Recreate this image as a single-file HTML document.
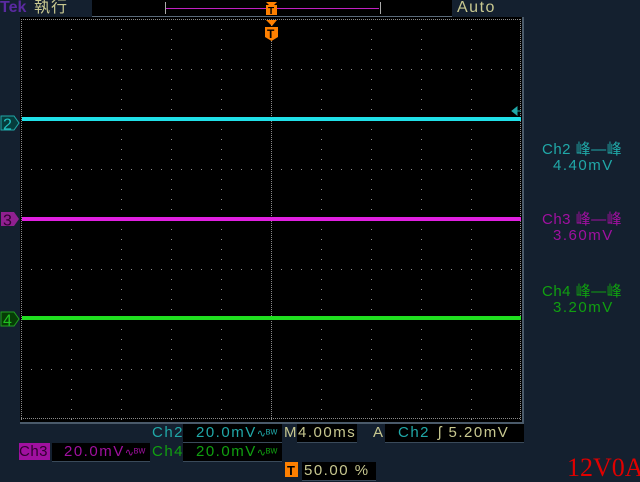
<!DOCTYPE html>
<html><head><meta charset="utf-8"><style>
*{margin:0;padding:0}
body{width:640px;height:480px;background:#14202f;position:relative;overflow:hidden;font-family:"Liberation Sans","Noto Sans CJK TC",sans-serif}
.t{position:absolute;font-size:15px;line-height:16px;white-space:nowrap;letter-spacing:1.5px}
.box{position:absolute;background:#000;height:18px;border-bottom:1px solid #3a4a5a}
.r{font-size:15px;letter-spacing:1.5px}
</style></head><body>
<div class="t" style="left:0;top:0;color:#5a2aa0;font-weight:bold;font-size:16px;letter-spacing:0">Tek</div>
<div class="t" style="left:34px;top:0;color:#c8c890;font-size:16px;letter-spacing:1px">執行</div>
<div style="position:absolute;left:92px;top:0;width:360px;height:16px;background:#000;border-bottom:1px solid #5a6a7a"></div>
<div style="position:absolute;left:165px;top:2px;width:214px;height:12px;border-left:1px solid #aaa;border-right:1px solid #aaa"></div>
<div style="position:absolute;left:166px;top:8px;width:213px;height:1px;background:#c020c0"></div>
<div class="t" style="left:457px;top:0;color:#c8c890;font-size:16px">Auto</div>
<div style="position:absolute;left:20px;top:17px;width:502px;height:405px;background:#000;border-right:2px solid #4a5a6a;border-bottom:2px solid #4a5a6a"></div>
<svg style="position:absolute;left:0;top:0" width="640" height="480">
<g stroke="#8a8a8a" stroke-width="1" stroke-dasharray="1,9">
<line x1="21.5" y1="19" x2="21.5" y2="420" stroke-dasharray="1,1"/>
<line x1="71.5" y1="19" x2="71.5" y2="420"/><line x1="121.5" y1="19" x2="121.5" y2="420"/><line x1="171.5" y1="19" x2="171.5" y2="420"/><line x1="221.5" y1="19" x2="221.5" y2="420"/><line x1="271.5" y1="19" x2="271.5" y2="420" stroke-dasharray="1,1"/><line x1="321.5" y1="19" x2="321.5" y2="420"/><line x1="371.5" y1="19" x2="371.5" y2="420"/><line x1="421.5" y1="19" x2="421.5" y2="420"/><line x1="471.5" y1="19" x2="471.5" y2="420"/><line x1="520.5" y1="19" x2="520.5" y2="420" stroke-dasharray="1,1"/>
<line x1="21" y1="19.5" x2="521" y2="19.5" stroke-dasharray="1,1"/><line x1="21" y1="69.5" x2="521" y2="69.5"/><line x1="21" y1="119.5" x2="521" y2="119.5"/><line x1="21" y1="169.5" x2="521" y2="169.5"/><line x1="21" y1="219.5" x2="521" y2="219.5" stroke-dasharray="1,1"/><line x1="21" y1="269.5" x2="521" y2="269.5"/><line x1="21" y1="319.5" x2="521" y2="319.5"/><line x1="21" y1="369.5" x2="521" y2="369.5"/><line x1="21" y1="418.5" x2="521" y2="418.5" stroke-dasharray="1,1"/>
</g>
<line x1="22" y1="119" x2="521" y2="119" stroke="#20e0e8" stroke-width="4"/>
<line x1="22" y1="219" x2="521" y2="219" stroke="#e020e0" stroke-width="4"/>
<line x1="22" y1="318" x2="521" y2="318" stroke="#20e020" stroke-width="4"/>
<path d="M1 116h13l5 7l-5 7h-13z" fill="#063c3c" stroke="#20a8a8"/>
<text x="3" y="129.5" font-size="16" fill="#20c0c0" font-family="Liberation Sans">2</text>
<path d="M1 212h13l5 7l-5 7h-13z" fill="#902090"/>
<text x="3" y="225.5" font-size="16" fill="#300030" font-family="Liberation Sans">3</text>
<path d="M1 312h13l5 7l-5 7h-13z" fill="#063c06" stroke="#20a020"/>
<text x="3" y="325.5" font-size="16" fill="#20c020" font-family="Liberation Sans">4</text>
<path d="M512 111l5 -4v8z M516 111h5" fill="#20a8a8" stroke="#20a8a8"/>
<path d="M266 2h11l-3 3h-5z" fill="#ff8000"/>
<rect x="266" y="5" width="11" height="10" fill="#ff8000"/>
<text x="268" y="14" font-size="10" font-weight="bold" fill="#000" font-family="Liberation Sans">T</text>
<path d="M266 20h11l-5 6z" fill="#ff8000"/>
<path d="M265 27h13v10l-6.5 4l-6.5-4z" fill="#ff8000"/>
<text x="267" y="38" font-size="12" font-weight="bold" fill="#000" font-family="Liberation Sans">T</text>
<rect x="285" y="462" width="13" height="15" fill="#ff8000"/>
<text x="287" y="475" font-size="13" font-weight="bold" fill="#000" font-family="Liberation Sans">T</text>
</svg>
<div class="t" style="left:542px;top:142px;color:#20a8a8;font-size:15px;letter-spacing:0.5px">Ch2 峰—峰</div>
<div class="t" style="left:553px;top:158px;color:#20a8a8">4.40mV</div>
<div class="t" style="left:542px;top:212px;color:#a010a0;font-size:15px;letter-spacing:0.5px">Ch3 峰—峰</div>
<div class="t" style="left:553px;top:228px;color:#a010a0">3.60mV</div>
<div class="t" style="left:542px;top:284px;color:#10a010;font-size:15px;letter-spacing:0.5px">Ch4 峰—峰</div>
<div class="t" style="left:553px;top:300px;color:#10a010">3.20mV</div>
<div class="box" style="left:183px;top:424px;width:99px"></div>
<div class="box" style="left:297px;top:424px;width:60px"></div>
<div class="box" style="left:385px;top:424px;width:139px"></div>
<div class="box" style="left:52px;top:443px;width:98px"></div>
<div class="box" style="left:183px;top:443px;width:99px"></div>
<div class="box" style="left:302px;top:462px;width:74px"></div>
<div class="t" style="left:152px;top:425px;color:#20a8a8">Ch2</div>
<div class="t" style="left:196px;top:425px;color:#20a8a8">20.0mV<span style="font-size:11px;letter-spacing:0">∿ᴮᵂ</span></div>
<div class="t" style="left:284px;top:425px;color:#c8c890">M</div>
<div class="t" style="left:298px;top:425px;color:#c8c890">4.00ms</div>
<div class="t" style="left:373px;top:425px;color:#c8c890">A</div>
<div class="t" style="left:398px;top:425px;color:#20a8a8">Ch2</div>
<div class="t" style="left:438px;top:425px;color:#c8c890">ʃ&nbsp;5.20mV</div>
<div style="position:absolute;left:19px;top:443px;width:31px;height:17px;background:#a010a0"></div>
<div class="t" style="left:19px;top:444px;color:#300030;letter-spacing:0.5px">Ch3</div>
<div class="t" style="left:64px;top:444px;color:#a010a0">20.0mV<span style="font-size:11px;letter-spacing:0">∿ᴮᵂ</span></div>
<div class="t" style="left:152px;top:444px;color:#10a010">Ch4</div>
<div class="t" style="left:196px;top:444px;color:#10a010">20.0mV<span style="font-size:11px;letter-spacing:0">∿ᴮᵂ</span></div>
<div class="t" style="left:304px;top:463px;color:#c8c890">50.00 %</div>
<div class="t" style="left:567px;top:455px;color:#e00000;font-family:'Liberation Serif',serif;font-size:26px;line-height:26px;letter-spacing:0">12V0A</div>
</body></html>
